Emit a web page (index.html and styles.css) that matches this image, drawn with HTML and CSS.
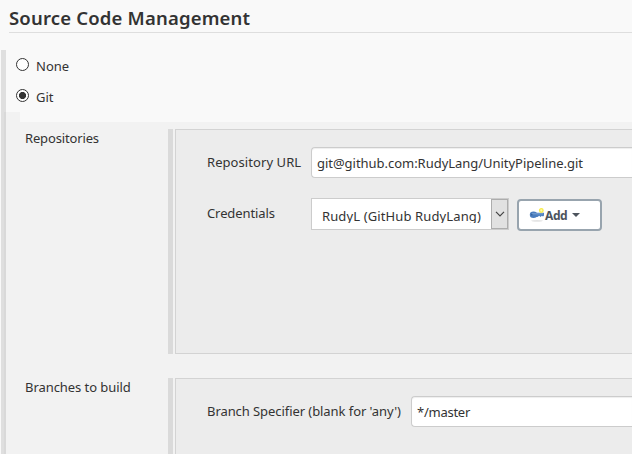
FILE: index.html
```html
<!DOCTYPE html>
<html lang="en">
<head>
<meta charset="utf-8">
<title>Source Code Management</title>
<link rel="stylesheet" href="styles.css">
</head>
<body>
<h1 class="heading">Source Code Management</h1>
<main class="scm">
  <div class="choices">
    <label class="choice"><i class="radio"></i><span>None</span></label>
    <label class="choice"><i class="radio radio-on"></i><span>Git</span></label>
  </div>
  <div class="settings">
    <section class="block block-repos">
      <div class="block-name block-name-tight">Repositories</div>
      <div class="bar"></div>
      <div class="panel">
        <div class="row">
          <div class="label label-url">Repository URL</div>
          <div class="input">git@github.com:RudyLang/UnityPipeline.git</div>
        </div>
        <div class="row row-credentials">
          <div class="label label-credentials">Credentials</div>
          <div class="select">
            <div class="select-text">RudyL (GitHub RudyLang)</div>
            <div class="select-arrow"><svg width="10" height="6" viewBox="0 0 10 6"><path d="M1 .8 5 4.8 9 .8" fill="none" stroke="#444" stroke-width="1.2"/></svg></div>
          </div>
          <div class="add">
            <svg class="key" width="16" height="16" viewBox="0 0 16 16">
              <ellipse cx="8" cy="13.8" rx="6" ry=".9" fill="#e4e4e4"/>
              <path d="M5 5.800h10v2.600l-1 1-1.200-.7-1.200 1.200-1.400-1.200-1.700 1.300H5z" fill="#4f80bf"/>
              <ellipse cx="4.500" cy="7.800" rx="3.700" ry="3.300" fill="#4a7dbd"/>
              <path d="M3 6.800h11" stroke="#7ba3d3" stroke-width="1"/>
              <circle cx="2.800" cy="7.800" r=".8" fill="#315d96"/>
              <circle cx="12.300" cy="3.500" r="1.800" fill="#fffbb0" stroke="#f8ed48" stroke-width="1.300"/>
            </svg>
            <span class="add-text">Add</span>
            <i class="caret"></i>
          </div>
        </div>
      </div>
    </section>
    <section class="block block-branches">
      <div class="block-name">Branches to build</div>
      <div class="bar"></div>
      <div class="panel">
        <div class="row">
          <div class="label label-wide">Branch Specifier (blank for 'any')</div>
          <div class="input input-branch">*/master</div>
        </div>
      </div>
    </section>
  </div>
</main>
</body>
</html>
```
FILE: styles.css
```css
* { box-sizing: border-box; }
body {
  margin: 0;
  width: 632px;
  height: 454px;
  overflow: hidden;
  background: #f9f9f9;
  color: #333;
  font: 13px/20px "Noto Sans", "Open Sans", sans-serif;
  white-space: nowrap;
}
.heading {
  margin: 0 0 17px 9px;
  height: 33px;
  padding-top: 6px;
  border-bottom: 1px solid #dedede;
  font-size: 18.5px;
  font-weight: 600;
  line-height: 24px;
  letter-spacing: .18px;
}
.scm {
  height: 404px;
  margin-left: 1px;
  border-left: 5px solid #dfdfdf;
}
.choices { height: 62px; padding: 6px 0 0 10px; }
.choice { display: flex; height: 31px; line-height: 20px; }
.radio {
  width: 13px;
  height: 13px;
  margin: 2px 7px 0 0;
  border: 1px solid #333;
  border-radius: 50%;
  background: #fff;
}
.radio-on { background: radial-gradient(circle, #333 0 3.2px, #fff 3.9px); }
.settings {
  height: 342px;
  margin-left: -2px;
  padding-top: 17px;
  border-left: 2px solid #d9d9d9;
  background: linear-gradient(#f9f9f9, #f9f9f9) 14px 0 / 100% 10px no-repeat #f2f2f2;
}
.block { display: flex; padding-left: 19px; }
.block-repos { height: 225px; margin-bottom: 24px; }
.block-branches { height: 76px; }
.block-name { width: 143px; line-height: 18px; letter-spacing: -.06px; }
.block-name-tight { letter-spacing: -.15px; }
.bar { width: 5px; margin-right: 2px; background: #dadada; }
.panel {
  flex: 1;
  padding: 17px 0 0 31px;
  border: 1px solid #d3d3d3;
  border-right: 0;
  background: #ececec;
}
.block-branches .panel { border-bottom: 0; }
.row { display: flex; height: 31px; }
.row-credentials { margin-top: 20px; height: 32px; }
.label { width: 104px; padding-top: 5px; }
.label-url { letter-spacing: .07px; }
.label-credentials { letter-spacing: -.1px; }
.label-wide { width: 204px; letter-spacing: -.07px; }
.input {
  flex: 1;
  padding: 5px 0 0 5px;
  border: 1px solid #ccc;
  border-right: 0;
  border-radius: 4px 0 0 4px;
  background: #fff;
  box-shadow: inset 0 1px 1px #eee;
  letter-spacing: -.03px;
}
.input-branch { letter-spacing: -.25px; }
.select { display: flex; width: 198px; border: 1px solid #ccc; background: #fff; }
.select-text {
  width: 179px;
  height: 24px;
  padding: 7px 0 0 10px;
  overflow: hidden;
  letter-spacing: .12px;
}
.select-arrow {
  display: flex;
  width: 17px;
  align-items: center;
  justify-content: center;
  border: 1px solid #adadad;
  background: #e1e1e1;
}
.add {
  display: flex;
  width: 85px;
  margin: 1px 0 0 8px;
  height: 32px;
  padding-left: 10px;
  align-items: center;
  border: 2px solid #98a4ae;
  border-radius: 4px;
  background: #fff;
  font-size: 12px;
  font-weight: 700;
  color: #4d545d;
}
.add-text { padding-top: 2px; letter-spacing: -.4px; }
.caret {
  margin-left: 5px;
  border: 4px solid transparent;
  border-top-color: #4d545d;
  border-bottom: 0;
}
```
